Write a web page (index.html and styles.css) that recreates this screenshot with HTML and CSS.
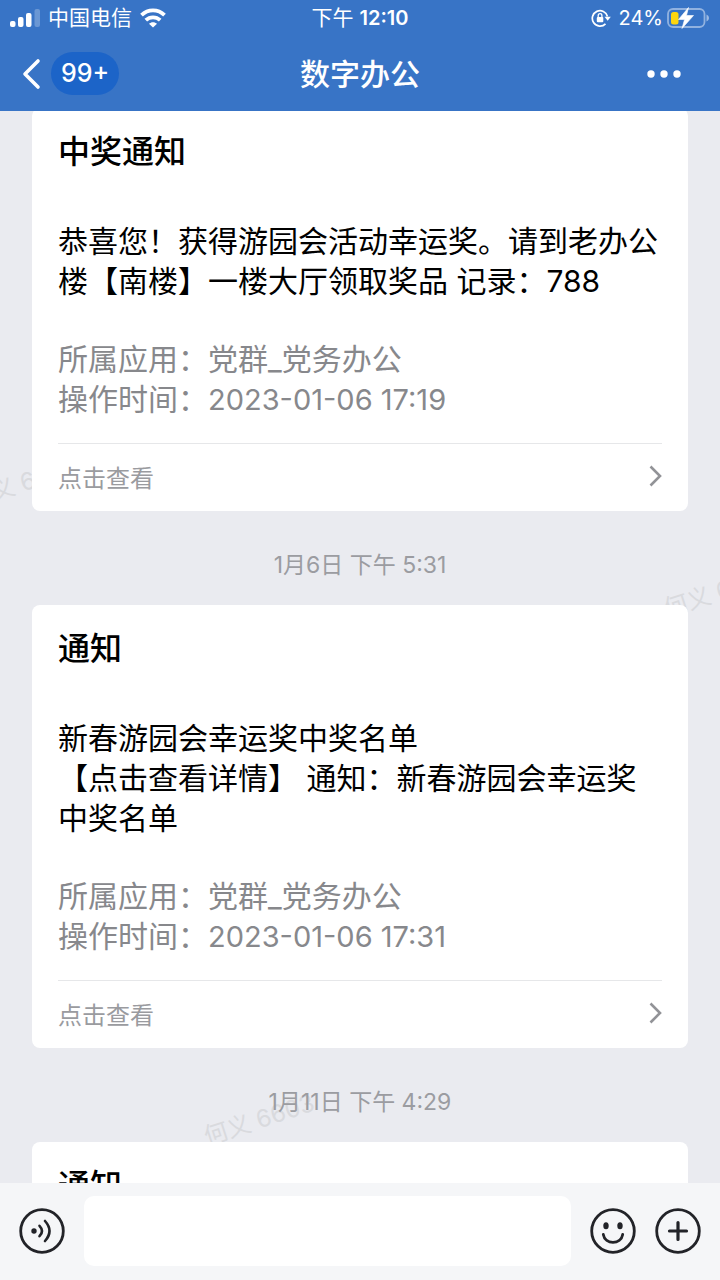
FILE: index.html
```
<!DOCTYPE html>
<html lang="zh-CN">
<head>
    <meta charset="UTF-8">
    <meta name="viewport" content="width=device-width, initial-scale=1.0">
    <title>数字办公</title>
    <link rel="stylesheet" href="styles.css">
</head>
<body>
    <div class="app">
        <header class="header">
            <div class="status-bar">
                <div class="status-left">
                    <svg class="signal" width="30" height="18" viewBox="0 0 30 18" fill="#fff">
                        <rect x="0" y="12" width="5.500" height="6" rx="2"/>
                        <rect x="8" y="8" width="5.500" height="10" rx="2"/>
                        <rect x="16" y="4" width="5.500" height="14" rx="2"/>
                        <rect x="24.500" y="0" width="5.500" height="18" rx="2" opacity="0.250"/>
                    </svg>
                    <span>中国电信</span>
                    <svg class="wifi" width="26" height="20" viewBox="0 0 26 20" fill="none" stroke="#fff" stroke-width="3.800">
                        <path d="M1.500 7.200C8 .7 18 .7 24.500 7.200"/>
                        <path d="M5.800 12.200C10 8.300 16 8.300 20.200 12.200"/>
                        <path d="M13 19.500L9 15.800C11 13.600 15 13.600 17 15.800Z" fill="#fff" stroke="none"/>
                    </svg>
                </div>
                <div class="status-time">下午 <b>12:10</b></div>
                <div class="status-right">
                    <svg width="20" height="20" viewBox="0 0 20 20" fill="none" stroke="#fff" stroke-width="1.700">
                        <path d="M16.500 8.500A7.700 7.700 0 1 0 14.500 15.800"/>
                        <path d="M13.500 8.800H19.800L16.700 12.800Z" fill="#fff" stroke="none"/>
                        <rect x="5.800" y="9" width="6.500" height="5.300" rx="1" fill="#fff" stroke="none"/>
                        <path d="M7.200 9.500V7.500A1.850 1.850 0 0 1 10.900 7.500V9.500" stroke-width="1.300"/>
                    </svg>
                    <span class="percent">24%</span>
                    <svg width="43" height="22" viewBox="0 0 43 22">
                        <rect x="1" y="2" width="36.500" height="18" rx="5" fill="none" stroke="#fff" stroke-opacity="0.450" stroke-width="1.800"/>
                        <path d="M39.500 7.500C42.800 9 42.800 13 39.500 14.500Z" fill="#fff" fill-opacity="0.500"/>
                        <rect x="4" y="5" width="7.500" height="12.500" rx="2.500" fill="#fdd60f"/>
                        <path d="M21.500 .5L11.500 12.500H17.500L15 21.500L26.500 8.500H19.500Z" fill="#fff" stroke="#fff" stroke-width="0.600" stroke-linejoin="round"/>
                    </svg>
                </div>
            </div>
            <nav class="nav-bar">
                <button class="back" aria-label="返回">
                    <svg width="20" height="32" viewBox="0 0 20 32" fill="none" stroke="#fff" stroke-width="3.600" stroke-linecap="round" stroke-linejoin="round">
                        <path d="M17 3L4 16L17 29"/>
                    </svg>
                    <span class="unread">99+</span>
                </button>
                <h1>数字办公</h1>
                <button class="more" aria-label="更多">
                    <svg width="34" height="8" viewBox="0 0 34 8" fill="#fff">
                        <circle cx="4" cy="4" r="3.700"/>
                        <circle cx="17" cy="4" r="3.700"/>
                        <circle cx="30" cy="4" r="3.700"/>
                    </svg>
                </button>
            </nav>
        </header>

        <main class="chat">
            <div class="watermark mark-left" aria-hidden="true">何义 6603</div>
            <div class="watermark mark-right" aria-hidden="true">何义 6603</div>
            <div class="watermark mark-bottom" aria-hidden="true">何义 6603</div>

            <div class="messages">
                <article class="card">
                    <h2>中奖通知</h2>
                    <p class="content">恭喜您！获得游园会活动幸运奖。请到老办公楼【南楼】一楼大厅领取奖品 记录：788</p>
                    <p class="meta">所属应用：党群_党务办公<br>操作时间：<span class="date">2023-01-06 17:19</span></p>
                    <a class="view" href="#">
                        <span>点击查看</span>
                        <svg width="14" height="22" viewBox="0 0 14 22" fill="none" stroke="#929397" stroke-width="2.600"><path d="M2.500 1.500L12 11L2.500 20.500"/></svg>
                    </a>
                </article>

                <time class="timestamp">1月6日 下午 5:31</time>

                <article class="card">
                    <h2>通知</h2>
                    <p class="content">新春游园会幸运奖中奖名单<br>【点击查看详情】 通知：新春游园会幸运奖中奖名单</p>
                    <p class="meta">所属应用：党群_党务办公<br>操作时间：<span class="date">2023-01-06 17:31</span></p>
                    <a class="view" href="#">
                        <span>点击查看</span>
                        <svg width="14" height="22" viewBox="0 0 14 22" fill="none" stroke="#929397" stroke-width="2.600"><path d="M2.500 1.500L12 11L2.500 20.500"/></svg>
                    </a>
                </article>

                <time class="timestamp">1月11日 下午 4:29</time>

                <article class="card">
                    <h2>通知</h2>
                </article>
            </div>
        </main>

        <footer class="composer">
            <button aria-label="语音">
                <svg width="46" height="46" viewBox="0 0 46 46" fill="none" stroke="#222328" stroke-width="2.800" stroke-linecap="round">
                    <circle cx="23" cy="23" r="21.300"/>
                    <circle cx="15" cy="23" r="2.700" fill="#222328" stroke="none"/>
                    <path d="M20.500 17.800Q25.500 23 20.500 28.200" stroke-width="2.600"/>
                    <path d="M26 13Q35 23 26 33" stroke-width="2.600"/>
                </svg>
            </button>
            <input type="text" aria-label="输入消息">
            <button aria-label="表情">
                <svg width="46" height="46" viewBox="0 0 46 46" fill="none" stroke="#222328" stroke-width="2.800" stroke-linecap="round">
                    <circle cx="23" cy="23" r="21.300"/>
                    <ellipse cx="16" cy="17.700" rx="2.700" ry="3.500" fill="#222328" stroke="none"/>
                    <ellipse cx="30" cy="17.700" rx="2.700" ry="3.500" fill="#222328" stroke="none"/>
                    <path d="M13.300 26.500C15 37 31 37 32.700 26.500"/>
                </svg>
            </button>
            <button aria-label="更多功能">
                <svg width="46" height="46" viewBox="0 0 46 46" fill="none" stroke="#222328" stroke-width="2.800" stroke-linecap="round">
                    <circle cx="23" cy="23" r="21.300"/>
                    <path d="M23 14.500V31.500M14.500 23H31.500" stroke-width="3.200"/>
                </svg>
            </button>
        </footer>
    </div>
</body>
</html>
```
FILE: styles.css
```
* {
    box-sizing: border-box;
}
body {
    margin: 0;
    background-color: #eaebf0;
    color: #000000;
    font-family: Inter, "Noto Sans CJK SC", sans-serif;
}
h1, h2, p {
    margin: 0;
}
button {
    padding: 0;
    border: none;
    background: none;
    color: inherit;
    font-family: inherit;
    cursor: pointer;
}
svg {
    display: block;
    flex: none;
}
.app {
    display: flex;
    flex-direction: column;
    height: 100vh;
}

/* header */
.header {
    background-color: #3874c6;
    color: #ffffff;
}
.status-bar, .nav-bar {
    display: grid;
    grid-template-columns: 1fr auto 1fr;
    align-items: center;
}
.status-bar {
    height: 36px;
    padding: 0 10px;
    font-size: 21px;
    line-height: 36px;
}
.status-left, .status-right {
    display: flex;
    align-items: center;
    gap: 8px;
}
.status-right {
    justify-content: flex-end;
}
.percent {
    font-size: 20px;
    margin-right: -4px;
}
.status-time b {
    font-size: 20px;
    font-weight: 600;
}
.nav-bar {
    height: 75px;
    padding: 0 21px;
}
.back {
    display: flex;
    align-items: center;
    gap: 10px;
}
.unread {
    padding: 0 10px;
    border-radius: 22px;
    background-color: #1c64c8;
    font-size: 25px;
    font-weight: 500;
    line-height: 43px;
}
.nav-bar h1 {
    font-size: 30px;
    font-weight: 500;
    line-height: 40px;
}
.more {
    justify-self: end;
    padding: 16px 18px;
}

/* messages */
.chat {
    position: relative;
    flex: 1;
    min-height: 0;
    overflow: hidden;
}
.messages {
    position: relative;
    margin-top: -3px;
    padding: 0 32px;
}
.card {
    padding: 21px 26px 0;
    border-radius: 8px;
    background-color: #ffffff;
}
.card h2 {
    margin-bottom: 46px;
    font-size: 32px;
    font-weight: 500;
    line-height: 46px;
}
.content, .meta {
    font-size: 30px;
    line-height: 40px;
}
.meta {
    margin-top: 38px;
    color: #87888c;
}
.date {
    font-size: 29px;
}
.view {
    display: flex;
    align-items: center;
    justify-content: space-between;
    height: 68px;
    margin-top: 23px;
    padding-bottom: 3px;
    border-top: 1px solid #e6e7e9;
    color: #9a9b9f;
    font-size: 24px;
    text-decoration: none;
}
.timestamp {
    display: block;
    padding: 38px 0 24px;
    color: #9b9ca1;
    font-size: 23px;
    line-height: 32px;
    text-align: center;
}
.watermark {
    position: absolute;
    color: #d9dade;
    font-size: 24px;
    line-height: 32px;
    white-space: nowrap;
    transform: rotate(-18deg);
}
.mark-left {
    left: -34px;
    top: 356px;
}
.mark-right {
    left: 662px;
    top: 465px;
}
.mark-bottom {
    left: 202px;
    top: 993px;
}

/* bottom input */
.composer {
    display: flex;
    align-items: center;
    gap: 19px;
    padding: 13px 19px 14px;
    background-color: #f5f6f8;
}
.composer input {
    flex: 1;
    min-width: 0;
    height: 70px;
    padding: 0 20px;
    border: none;
    border-radius: 10px;
    background-color: #ffffff;
    font-family: inherit;
    font-size: 30px;
}
```
